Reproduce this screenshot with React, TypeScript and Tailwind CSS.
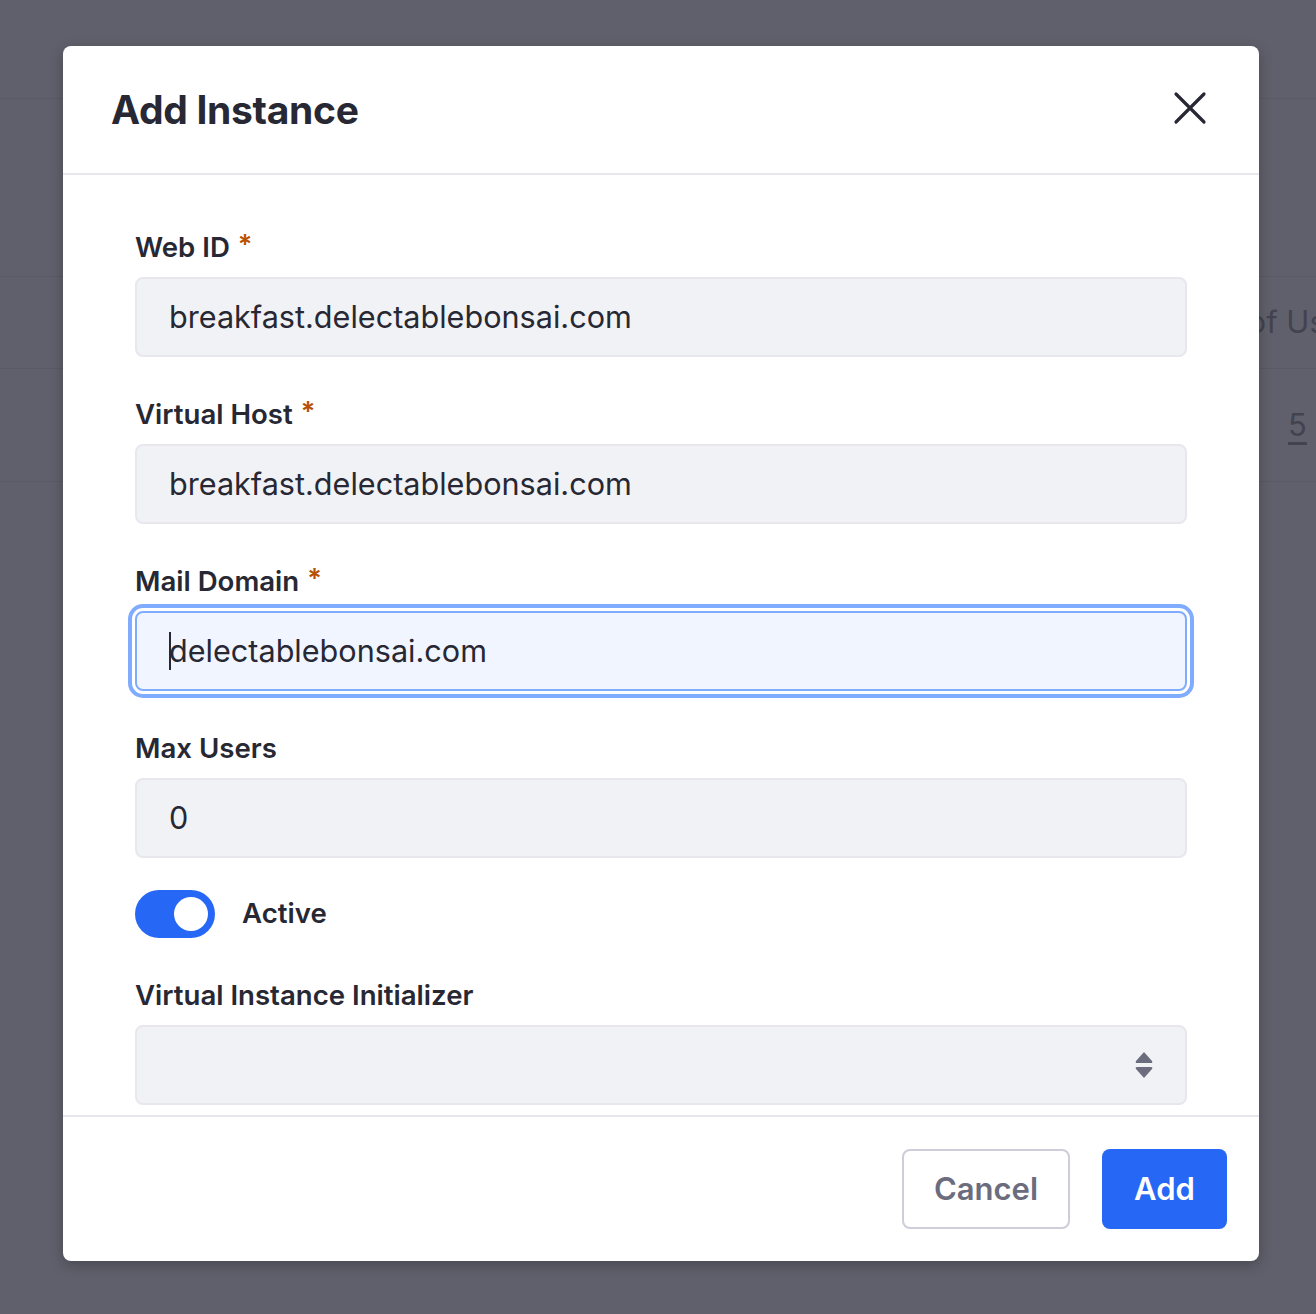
import React from "react";

const font = { fontFamily: "Inter, 'Noto Sans', sans-serif" };

const Label = ({ text, required }: { text: string; required?: boolean }) => (
  <div className="h-[40px] flex items-center text-[27.6px] font-semibold text-[#272833]">
    {text}
    {required && <span className="ml-[8px] text-[#b95000] text-[27px] -mt-[6px]">*</span>}
  </div>
);

const Field = ({
  label,
  value,
  required,
  focused,
}: {
  label: string;
  value: string;
  required?: boolean;
  focused?: boolean;
}) => (
  <div className="mb-[38px]">
    <Label text={label} required={required} />
    <div
      className={
        focused
          ? "mt-[9px] h-[80px] rounded-[8px] border-2 border-[#80acff] bg-[#f0f5ff] shadow-[0_0_0_3px_#fff,0_0_0_7px_#80acff] flex items-center pl-[32px] text-[30.6px] text-[#272833]"
          : "mt-[9px] h-[80px] rounded-[8px] border-2 border-[#e7e7ed] bg-[#f1f2f5] flex items-center pl-[32px] text-[30.6px] text-[#272833]"
      }
    >
      {focused && <span className="w-[2px] h-[38px] bg-[#272833] -mr-[2px]" />}
      {value}
    </div>
  </div>
);

export default function App() {
  return (
    <div className="relative w-full h-[1314px] overflow-hidden bg-[#60606c]" style={font}>
      {/* page behind the overlay */}
      <div className="flex flex-col text-[#43434f]">
        <div className="h-[99px] border-b border-[#5a5a66]" />
        <div className="h-[178px] border-b border-[#5a5a66]" />
        <div className="h-[92px] border-b border-[#5a5a66] flex items-center pl-[1188px] whitespace-nowrap text-[31px]">
          No. of Users
        </div>
        <div className="h-[113px] border-b border-[#5a5a66] flex items-center pl-[1288px] text-[31px]">
          <span className="underline underline-offset-[6px]">5</span>
        </div>
      </div>

      {/* modal */}
      <div className="absolute left-[63px] top-[46px] w-[1196px] h-[1215px] bg-white rounded-[8px] shadow-[0_4px_14px_rgba(0,0,0,0.25)] flex flex-col overflow-hidden">
        <div className="h-[129px] shrink-0 border-b-2 border-[#e7e7ed] flex items-center justify-between pl-[48px] pr-[52px]">
          <h1 className="text-[39px] font-bold text-[#272833] tracking-[-0.3px] mt-[2px]">Add Instance</h1>
          <svg width="34" height="34" viewBox="0 0 34 34" fill="none" className="-mt-[4px]">
            <path d="M3 3L31 31M31 3L3 31" stroke="#272833" strokeWidth="3.2" strokeLinecap="round" />
          </svg>
        </div>

        <div className="flex-1 overflow-hidden pt-[53px] px-[72px]">
          <Field label="Web ID" value="breakfast.delectablebonsai.com" required />
          <Field label="Virtual Host" value="breakfast.delectablebonsai.com" required />
          <Field label="Mail Domain" value="delectablebonsai.com" required focused />
          <div>
            <Label text="Max Users" />
            <div className="mt-[9px] h-[80px] rounded-[8px] border-2 border-[#e7e7ed] bg-[#f1f2f5] flex items-center pl-[32px] text-[30.6px] text-[#272833]">
              0
            </div>
          </div>
          <div className="mt-[32px] flex items-center gap-[27px]">
            <div className="w-[80px] h-[48px] rounded-full bg-[#2667f5] flex items-center justify-end pr-[7px]">
              <div className="w-[34px] h-[34px] rounded-full bg-white" />
            </div>
            <span className="text-[27.6px] font-semibold text-[#272833]">Active</span>
          </div>
          <div className="mt-[38px]">
            <Label text="Virtual Instance Initializer" />
            <div className="mt-[9px] h-[80px] rounded-[8px] border-2 border-[#e7e7ed] bg-[#f1f2f5] flex items-center justify-end pr-[31px]">
              <svg width="20" height="30" viewBox="0 0 20 30">
                <path d="M10 2 L18 11 Q19 13 17 13 L3 13 Q1 13 2 11 Z" fill="#6b6c7e" />
                <path d="M10 28 L18 19 Q19 17 17 17 L3 17 Q1 17 2 19 Z" fill="#6b6c7e" />
              </svg>
            </div>
            <div className="mt-[38px] h-[40px]" />
          </div>
        </div>

        <div className="h-[146px] shrink-0 border-t-2 border-[#e7e7ed] flex items-center justify-end gap-[32px] pr-[32px]">
          <button className="w-[168px] h-[80px] rounded-[8px] border-2 border-[#cdced9] bg-white text-[31px] font-semibold text-[#6b6c7e]">
            Cancel
          </button>
          <button className="w-[125px] h-[80px] rounded-[8px] bg-[#2667f5] text-[31px] font-semibold text-white">
            Add
          </button>
        </div>
      </div>
    </div>
  );
}
